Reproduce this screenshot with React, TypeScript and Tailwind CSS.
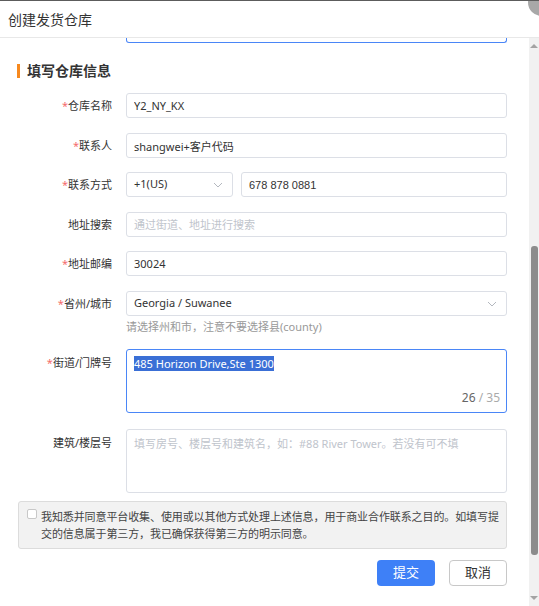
import React from 'react';

const inputCls =
  'block h-[25px] w-full rounded-[3px] border border-[#dcdfe6] bg-white px-[7px] text-[11px] text-[#333] outline-none placeholder:text-[#c0c4cc]';

function Chevron() {
  return (
    <svg width="10" height="6" viewBox="0 0 10 6" fill="none" className="shrink-0">
      <path d="M1 1l4 4 4-4" stroke="#b4b8bf" strokeWidth="1" />
    </svg>
  );
}

function Row({ label, required, top, children }: { label: string; required?: boolean; top?: boolean; children: React.ReactNode }) {
  return (
    <div className={`flex ${top ? 'items-start' : 'items-center'}`}>
      <div className={`w-[112px] shrink-0 text-right text-[11px] leading-[16px] text-[#333] ${top ? 'pt-[6px]' : ''}`}>
        {required && <span className="text-[#f56c6c]">*</span>}
        {label}
      </div>
      <div className="ml-[14px] flex-1">{children}</div>
    </div>
  );
}

export default function App() {
  return (
    <div className="relative flex h-[606px] w-[539px] flex-col overflow-hidden border-t border-[#5c5c5c] bg-white font-['Noto_Sans','Noto_Sans_CJK_SC',sans-serif]">
      {/* close button, mostly off-canvas */}
      <div className="absolute -right-[16px] -top-[12px] z-10 h-[27px] w-[27px] rounded-full bg-[#a8a8a8]" />

      <div className="flex h-[37px] shrink-0 items-center border-b border-[#e8e8e8] pl-[8px] text-[14px] text-[#333]">
        创建发货仓库
      </div>

      <div className="flex min-h-0 flex-1">
        <div className="flex-1 overflow-hidden pr-[22px]">
          {/* bottom edge of the field above */}
          <div className="ml-[126px] h-[5px] rounded-b-[3px] border border-t-0 border-[#4a86f7]" />

          <div className="mt-[21px] flex h-[14px] items-center pl-[17px]">
            <span className="h-[14px] w-[3px] bg-[#f7891e]" />
            <span className="ml-[7px] text-[14px] font-bold leading-[14px] text-[#333]">填写仓库信息</span>
          </div>

          <div className="mt-[15px]">
            <Row label="仓库名称" required>
              <input className={inputCls} readOnly value="Y2_NY_KX" />
            </Row>
          </div>
          <div className="mt-[15px]">
            <Row label="联系人" required>
              <input className={inputCls} readOnly value="shangwei+客户代码" />
            </Row>
          </div>
          <div className="mt-[14px]">
            <Row label="联系方式" required>
              <div className="flex gap-[8px]">
                <div className="flex h-[25px] w-[107px] shrink-0 items-center justify-between rounded-[3px] border border-[#dcdfe6] pl-[7px] pr-[9px] text-[11px] text-[#333]">
                  +1(US)
                  <Chevron />
                </div>
                <input className={`${inputCls} font-['Liberation_Sans',sans-serif]`} readOnly value="678 878 0881" />
              </div>
            </Row>
          </div>
          <div className="mt-[15px]">
            <Row label="地址搜索">
              <input className={inputCls} readOnly placeholder="通过街道、地址进行搜索" />
            </Row>
          </div>
          <div className="mt-[14px]">
            <Row label="地址邮编" required>
              <input className={inputCls} readOnly value="30024" />
            </Row>
          </div>
          <div className="mt-[15px]">
            <Row label="省州/城市" required>
              <div className="flex h-[25px] items-center justify-between rounded-[3px] border border-[#dcdfe6] pl-[7px] pr-[9px] text-[11px] text-[#333]">
                Georgia / Suwanee
                <Chevron />
              </div>
            </Row>
          </div>
          <div className="ml-[126px] mt-[3px] text-[11px] leading-[16px] text-[#999]">
            请选择州和市，注意不要选择县(county)
          </div>

          <div className="mt-[14px]">
            <Row label="街道/门牌号" required top>
              <div className="relative h-[64px] rounded-[3px] border border-[#4a86f7] px-[7px] pt-[6px] text-[11px] leading-[16px]">
                <span className="bg-[#3a6fd6] text-white">485 Horizon Drive,Ste 1300</span>
                <div className="absolute bottom-[7px] right-[6px] text-[12px] leading-[14px]">
                  <span className="text-[#666]">26</span>
                  <span className="text-[#aaa]"> / 35</span>
                </div>
              </div>
            </Row>
          </div>

          <div className="mt-[16px]">
            <Row label="建筑/楼层号" top>
              <textarea
                readOnly
                className="block h-[64px] w-full resize-none rounded-[3px] border border-[#dcdfe6] px-[7px] pt-[6px] text-[11px] leading-[16px] text-[#333] outline-none placeholder:text-[#c0c4cc]"
                placeholder="填写房号、楼层号和建筑名，如：#88 River Tower。若没有可不填"
              />
            </Row>
          </div>

          <div className="ml-[18px] mt-[8px] flex h-[48px] items-start gap-[4px] rounded-[3px] border border-[#dcdcdc] bg-[#f2f2f2] pl-[8px] pr-[1px] pt-[6px]">
            <span className="mt-[1px] h-[10px] w-[10px] shrink-0 rounded-[2px] border border-[#c8c8c8] bg-white" />
            <p className="text-[11px] leading-[17px] tracking-[-0.1px] text-[#444]">
              我知悉并同意平台收集、使用或以其他方式处理上述信息，用于商业合作联系之目的。如填写提交的信息属于第三方，我已确保获得第三方的明示同意。
            </p>
          </div>

          <div className="mt-[11px] flex justify-end gap-[14px]">
            <button className="h-[26px] w-[58px] rounded-[4px] bg-[#3e80f7] text-[13px] text-white">提交</button>
            <button className="h-[26px] w-[58px] rounded-[4px] border border-[#c8c8c8] bg-white text-[13px] text-[#333]">取消</button>
          </div>
        </div>

        {/* scrollbar */}
        <div className="flex w-[10px] shrink-0 flex-col items-center bg-[#f1f1f1]">
          <span className="mt-[6px] h-0 w-0 border-x-[4px] border-b-[4px] border-x-transparent border-b-[#a3a3a3]" />
          <span className="ml-[1px] mt-[198px] h-[309px] w-[7px] rounded-[3px] bg-[#8c8c8c]" />
          <span className="mb-[6px] mt-auto h-0 w-0 border-x-[4px] border-t-[4px] border-x-transparent border-t-[#a3a3a3]" />
        </div>
      </div>
    </div>
  );
}
